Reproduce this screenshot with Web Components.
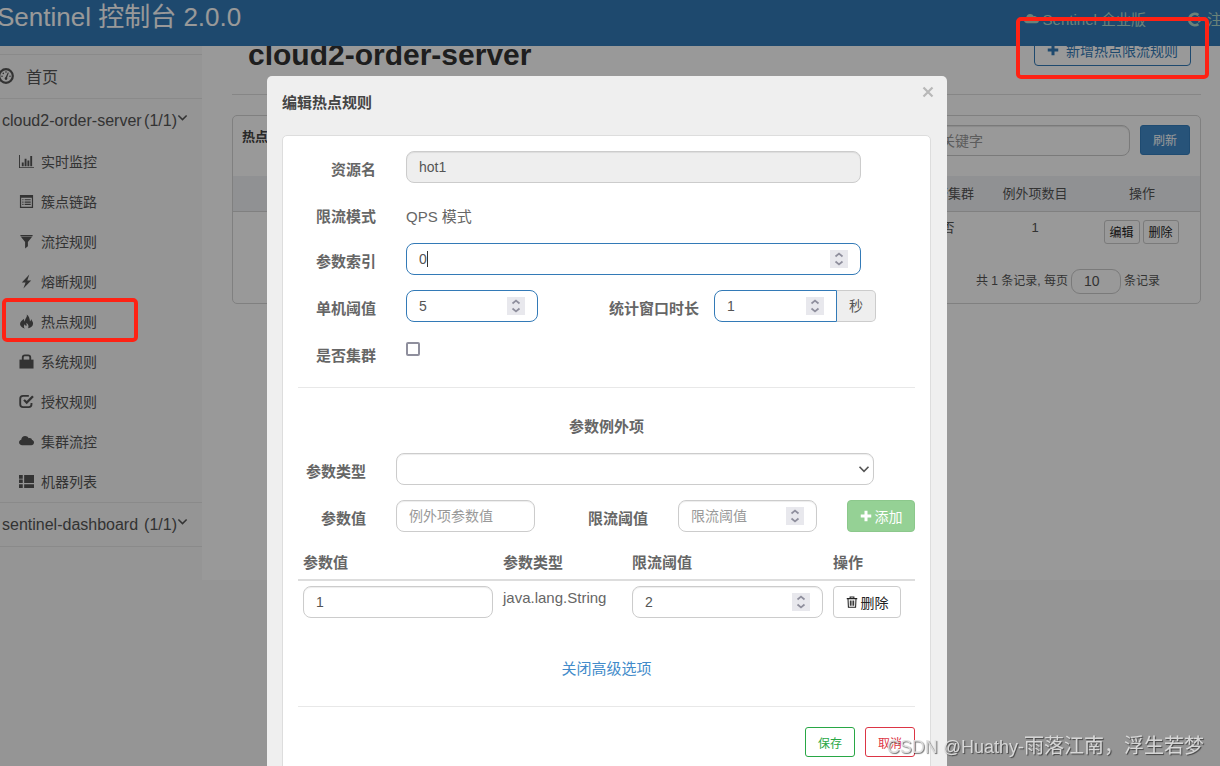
<!DOCTYPE html>
<html lang="zh-CN">
<head>
<meta charset="utf-8">
<title>Sentinel 控制台</title>
<style>
  html, body { margin: 0; min-height: 100%; background: #f8f8f8; }
  body { font-family: "Liberation Sans", "Noto Sans CJK SC", sans-serif; font-size: 14px; color: #555; overflow: hidden; }
</style>
</head>
<body>
<sentinel-console></sentinel-console>
<script>
class Base extends HTMLElement {
  constructor() {
    super();
    const t = document.createElement('template');
    t.innerHTML = `<style>*{box-sizing:border-box}button,input,select{font-family:inherit;margin:0}</style>` + this.view();
    this.attachShadow({ mode: 'open' }).appendChild(t.content.cloneNode(true));
  }
}

const ICONS = {
  gauge: '<circle cx="8" cy="8" r="6.8" fill="none" stroke="currentColor" stroke-width="2.2"/><path d="M7 10.5 9.8 4.4l1 .4-2.2 6.2z"/><circle cx="8" cy="10.6" r="1.3"/><circle cx="4" cy="8.3" r=".8"/><circle cx="5.3" cy="5.4" r=".8"/><circle cx="12" cy="8.3" r=".8"/><circle cx="8" cy="4" r=".8"/>',
  bars: '<path d="M0 1h1v13h15v1H0zM3 9h2v4H3zM6 5h2v8H6zM9 7h2v6H9zM12 2h2v11h-2z"/>',
  list: '<path d="M1 1h14v14H1zM2.300 4v9.700h11.400V4z" fill-rule="evenodd"/><path d="M3.500 5.500h1.300v1.200H3.500zM6 5.500h6.500v1.200H6zM3.500 8h1.300v1.200H3.500zM6 8h6.500v1.200H6zM3.500 10.500h1.300v1.200H3.500zM6 10.500h6.500v1.200H6z"/>',
  filter: '<path d="M1.500 1h13v1.300h-13zM2 3h12L9.500 8.500V13l-3 2.500v-7z"/>',
  flash: '<path d="M11 .500 3 9h4L4.700 15.500 13 6.800H8.800z"/>',
  fire: '<path d="M8.300.500c.8 3-2.300 4.500-2 7.500-.8-.6-1.200-1.800-.9-3C3.200 6.500.800 8.500 1.100 11c.2 2.500 2.900 4 5.200 4.500C4.700 14 5 12 6.200 10.800c.3 1.200 1 1.500 1.700 1.900.4-1.400.2-2.400-.2-3.400 1.900.9 3.200 3.700 1.900 6 2.900-.5 5.300-2.400 5.400-5 .1-2-1.500-3.500-2.100-5-.1 1.300-.5 2-1.200 2.600C11.600 5 10.500 2 8.300.500z"/>',
  lock: '<path d="M.500 6h15v9.500H.500z"/><path d="M4 7V3.800C4 2.400 5 1.500 6.300 1.500h3.400C11 1.500 12 2.400 12 3.800V7" fill="none" stroke="currentColor" stroke-width="2"/>',
  check: '<path d="M10.500 2H4.300C2.500 2 1.300 3.200 1.300 5v6c0 1.900 1.200 3 3 3h6c1.900 0 3-1.100 3-3V9.500" fill="none" stroke="currentColor" stroke-width="2"/><path d="m4.500 7 1.700-1.500 2 2L14 1.500 15.800 3.200 8.200 11z"/>',
  cloud: '<path d="M3.500 12C1.400 12 0 10.600 0 8.900c0-1.500 1-2.600 2.400-2.900C2.500 3.700 4.300 2 6.500 2c1.700 0 3.100.9 3.800 2.400.3-.1.700-.2 1-.2 1.400 0 2.500 1 2.600 2.300 1.300.3 2.100 1.400 2.100 2.600 0 1.600-1.300 2.900-2.900 2.900z"/>',
  grid: '<path d="M0 1h4v4H0zM5.500 1H16v8.500H5.500zM0 5.900h4v3.600H0zM0 11h4v4H0zM5.500 11H16v4H5.500z"/>',
  down: '<path d="m2 5 6 6 6-6" fill="none" stroke="currentColor" stroke-width="2.200"/>',
  plus: '<path d="M6 1h4v5h5v4h-5v5H6v-5H1V6h5z"/>',
  logout: '<path d="M11 3.200A6 6 0 1 0 11 12.800" fill="none" stroke="currentColor" stroke-width="3"/><path d="M6 6.500h5V4l5 4-5 4V9.500H6z"/>',
  trash: '<path d="M1 3.500h14M5.500 3V1.200h5V3M2.700 4l.5 11h9.600l.5-11M5.800 6v7M8 6v7M10.200 6v7" fill="none" stroke="currentColor" stroke-width="1.400"/>',
  close: '<path d="m2 2 12 12M14 2 2 14" fill="none" stroke="currentColor" stroke-width="3"/>'
};

customElements.define('glyph-icon', class extends Base {
  view() {
    return `<style>:host{display:inline-block;width:15px;height:15px;flex:none}svg{display:block;width:100%;height:100%;fill:currentColor}</style>
      <svg viewBox="0 0 16 16" aria-hidden="true">${ICONS[this.getAttribute('name')]}</svg>`;
  }
});

customElements.define('spin-buttons', class extends Base {
  view() {
    return `<style>:host{display:block;flex:none;width:18px;height:18px;background:#e8e8ed;color:#8f8f9d}svg{display:block}</style>
      <svg width="18" height="18" viewBox="0 0 18 18" fill="none" stroke="currentColor" stroke-width="1.700" aria-hidden="true"><path d="M5.500 6.500 9 3.500l3.500 3M5.500 11.500l3.500 3 3.500-3"/></svg>`;
  }
});

customElements.define('top-bar', class extends Base {
  view() {
    return `<style>
      :host{display:flex;justify-content:space-between;height:46px;background:#337ab7;position:relative;z-index:1;overflow:hidden;white-space:nowrap}
      .brand{margin-left:-3px;font-size:26px;line-height:34px;color:#fff;text-decoration:none}
      nav{display:flex;gap:42px;margin-right:-17px;padding-top:10px}
      nav a{display:flex;gap:4px;font-size:15px;line-height:20px;color:#b2d9ca;text-decoration:none}
      nav glyph-icon{margin-top:2px}
    </style>
    <a class="brand" href="#">Sentinel 控制台 2.0.0</a>
    <nav><a href="#"><glyph-icon name="cloud"></glyph-icon>Sentinel 企业版</a><a href="#"><glyph-icon name="logout"></glyph-icon>注销</a></nav>`;
  }
});

customElements.define('nav-item', class extends Base {
  view() {
    return `<style>
      :host{display:block}
      a{display:flex;align-items:center;gap:7px;height:40px;padding:0 0 2px 19px;font-size:14px;color:inherit;text-decoration:none}
      glyph-icon{width:15px;height:15px}
    </style><a href="#"><glyph-icon name="${this.getAttribute('icon')}"></glyph-icon><slot></slot></a>`;
  }
});

customElements.define('nav-group', class extends Base {
  view() {
    return `<style>
      :host{display:block;border-bottom:1px solid #e7e7e7}
      a{display:flex;align-items:center;height:43px;padding:0 14px 0 2px;font-size:16px;color:inherit;text-decoration:none}
      .count{margin-left:auto}
      glyph-icon{width:11px;height:11px;margin-bottom:6px}
    </style><a href="#"><span>${this.getAttribute('app')}</span><span class="count">(1/1)</span><glyph-icon name="down"></glyph-icon></a><slot></slot>`;
  }
});

customElements.define('side-nav', class extends Base {
  view() {
    return `<style>
      :host{display:block;flex:none;width:202px;padding:8px 0 33px;background:#f8f8f8;color:#555}
      .home{display:flex;align-items:center;gap:12px;height:45px;margin-left:-2px;padding-bottom:2px;border:solid #e7e7e7;border-width:1px 0;font-size:16px;color:inherit;text-decoration:none}
      .home glyph-icon{width:16px;height:16px}
    </style>
    <a class="home" href="#"><glyph-icon name="gauge"></glyph-icon>首页</a>
    <nav-group app="cloud2-order-server">
      <nav-item icon="bars">实时监控</nav-item>
      <nav-item icon="list">簇点链路</nav-item>
      <nav-item icon="filter">流控规则</nav-item>
      <nav-item icon="flash">熔断规则</nav-item>
      <nav-item icon="fire">热点规则</nav-item>
      <nav-item icon="lock">系统规则</nav-item>
      <nav-item icon="check">授权规则</nav-item>
      <nav-item icon="cloud">集群流控</nav-item>
      <nav-item icon="grid">机器列表</nav-item>
    </nav-group>
    <nav-group app="sentinel-dashboard"></nav-group>`;
  }
});

customElements.define('rule-list', class extends Base {
  view() {
    return `<style>
      :host{display:block;flex:1;min-width:0;padding:0 19px 0 30px;background:#fff}
      header{display:flex;justify-content:space-between;align-items:flex-start;margin-top:-12px;padding:0 10px 22px 16px;border-bottom:1px solid #e0e0e0}
      h1{margin:4px 0 0;font-size:30px;line-height:34px;color:#333}
      .new{display:flex;align-items:center;gap:7px;height:32px;padding:0 12px;font-size:14px;color:#337ab7;background:#fff;border:1px solid #337ab7;border-radius:4px}
      .new glyph-icon{width:12px;height:12px}
      .card{margin-top:20px;padding-bottom:9px;border:1px solid #d5d5d5;border-radius:5px;font-size:13px}
      .tools{display:flex;align-items:flex-start;gap:10px;padding:9px 10px 21px 9px}
      h2{flex:1;margin:2px 0 0;font-size:13px;line-height:20px;color:#444}
      .tools input{width:202px;height:31px;margin-bottom:-1px;padding:0 12px;font-size:14px;border:1px solid #ccc;border-radius:8px;box-shadow:inset 0 1px 1px rgba(0,0,0,.1)}
      input::placeholder{color:#999}
      .go{width:50px;height:30px;padding:0 0 1px;font-size:12px;color:#fff;background:#428bca;border:1px solid #357ebd;border-radius:3px}
      table{width:100%;border-collapse:collapse;table-layout:fixed}
      th{height:35px;padding:0 0 2px;font-weight:normal;background:#f0f2f5;border-bottom:1px solid #d5d5d5}
      td{padding:8px 0;line-height:16px;text-align:center;vertical-align:top}
      .ops{display:flex;justify-content:center;gap:3px;padding-right:2px}
      .ops button{width:36px;height:24px;padding:0;font-size:12px;color:#222;background:#fff;border:1px solid #ccc;border-radius:3px}
      footer{display:flex;align-items:center;justify-content:flex-end;gap:3px;padding:17px 40px 0 0;font-size:12px}
      label,footer span{padding-bottom:3px}
      footer input{width:50px;height:25px;padding:0 12px;font-size:14px;color:#555;border:1px solid #ccc;border-radius:9px;background:#fff}
    </style>
    <header><h1>cloud2-order-server</h1><button class="new"><glyph-icon name="plus"></glyph-icon>新增热点限流规则</button></header>
    <section class="card">
      <div class="tools"><h2>热点参数限流规则</h2><input aria-label="关键字" placeholder="关键字"><button class="go">刷新</button></div>
      <table>
        <colgroup><col><col style="width:76px"><col style="width:98px"><col style="width:116px"></colgroup>
        <thead><tr><th></th><th>是否集群</th><th>例外项数目</th><th>操作</th></tr></thead>
        <tbody><tr><td></td><td>否</td><td>1</td><td><div class="ops"><button>编辑</button><button>删除</button></div></td></tr></tbody>
      </table>
      <footer><label for="size">共 1 条记录, 每页</label><input id="size" value="10"><span>条记录</span></footer>
    </section>`;
  }
});

customElements.define('rule-dialog', class extends Base {
  view() {
    return `<style>
      :host{display:block;position:fixed;inset:0;z-index:2;padding:76px 6px 30px 0;overflow:auto;scrollbar-width:none;background:rgba(0,0,0,.4)}
      .dialog{max-width:680px;margin:0 auto;padding:15px 16px 15px 15px;background:#efefef;border-radius:5px;color:#555}
      .head{display:flex;justify-content:space-between;align-items:flex-start}
      h2{margin:0;padding:1px 0 21px;font-size:15px;line-height:22px;color:#444}
      .close{width:20px;height:20px;margin-right:-7px;margin-top:-9px;padding:4px;border:0;background:none;color:#b8b8b8}
      .close glyph-icon{display:block;width:12px;height:12px}
      .card{padding:15px;background:#fff;border:1px solid #ddd;border-radius:5px}
      .row{display:flex;align-items:flex-start;min-height:30px;margin-bottom:15px}
      .row>label,.name{flex:none;width:78px;margin-right:30px;padding-top:8px;text-align:right;font-size:15px;font-weight:bold;line-height:22px;color:#666}
      .row.sub>label{width:68px}
      .row>label.mid{flex:1;width:auto;margin-right:15px}
      .row.sub>label.mid{margin-right:30px}
      .text{padding-top:8px;font-size:15px;line-height:22px;color:#666}
      .box{position:relative;display:flex;align-items:center;height:32px;padding:0 12px;background:#fff;border:1px solid #ccc;border-radius:8px;box-shadow:inset 0 1px 1px rgba(0,0,0,.075)}
      .box input{flex:1;min-width:0;width:100%;height:30px;padding:0;border:0;outline:0;background:none;font-size:14px;color:#555;appearance:textfield}
      input::-webkit-inner-spin-button{display:none}
      input::placeholder{color:#999}
      .active{border-color:#337ab7;box-shadow:none}
      .locked{background:#eee}
      .fill{flex:1;margin-right:54px}
      .sub .fill{margin-right:41px}
      .caret{position:absolute;left:20px;top:7px;width:1px;height:16px;background:#333}
      .joined{border-radius:8px 0 0 8px}
      .addon{width:39px;height:32px;border:1px solid #ccc;border-left:0;border-radius:0 5px 5px 0;background:#eee;text-align:center;font-size:14px;line-height:30px}
      .w132{width:132px}.w122{width:123px}.w139{width:139px}.tail{margin-right:39px}
      input[type=checkbox]{appearance:none;width:14px;height:14px;margin-top:5px;border:2px solid #8f8f9d;border-radius:2px;background:#fff}
      hr{height:1px;margin:20px 0;border:0;background:#e8e8e8}
      h3{margin:0 0 15px;padding-top:8px;height:30px;font-size:15px;line-height:22px;text-align:center;color:#666}
      .pick{padding:0}
      select{flex:1;height:30px;padding:0 12px;border:0;outline:0;background:none;appearance:none;font-size:14px;color:#555}
      .pick glyph-icon{position:absolute;right:3px;width:12px;height:12px;pointer-events:none}
      .btn{display:flex;align-items:center;justify-content:center;gap:3px;width:68px;height:32px;padding:0;border:1px solid #ccc;border-radius:4px;background:#fff;font-size:14px;color:#222}
      .btn glyph-icon{width:12px;height:12px}
      .add{margin-left:30px;color:#fff;background:#95d195;border-color:#8cc88c}
      table{width:100%;border-collapse:separate;border-spacing:0;table-layout:fixed;font-size:15px;line-height:22px;color:#666}
      th{padding:5px;text-align:left;border-bottom:2px solid #ddd}
      td{padding:5px;vertical-align:top}
      td.kind{padding-top:6px}
      .more{margin:35px 0 26px;text-align:center;font-size:15px;line-height:22px}
      .more a{color:#428bca;text-decoration:none}
      .more+hr{margin-top:0}
      .foot{display:flex;justify-content:flex-end;gap:10px;padding-bottom:10px}
      .foot button{width:50px;height:30px;padding:0;border:1px solid;border-radius:3px;background:#fff;font-size:12px}
      .save{color:#28a745}.cancel{color:#dc3545}
    </style>
    <form class="dialog" role="dialog" aria-label="编辑热点规则" onsubmit="return false">
      <div class="head"><h2>编辑热点规则</h2><button type="button" class="close" aria-label="关闭"><glyph-icon name="close"></glyph-icon></button></div>
      <div class="card">
        <div class="row"><label for="res">资源名</label><div class="box fill locked"><input id="res" value="hot1" readonly></div></div>
        <div class="row"><span class="name">限流模式</span><span class="text">QPS 模式</span></div>
        <div class="row"><label for="idx">参数索引</label><div class="box fill active"><input id="idx" type="number" value="0"><i class="caret"></i><spin-buttons></spin-buttons></div></div>
        <div class="row"><label for="cnt">单机阈值</label><div class="box active w132"><input id="cnt" type="number" value="5"><spin-buttons></spin-buttons></div>
          <label class="mid" for="win">统计窗口时长</label><div class="box active joined w122"><input id="win" type="number" value="1"><spin-buttons></spin-buttons></div><span class="addon tail">秒</span></div>
        <div class="row"><label for="clu">是否集群</label><input id="clu" type="checkbox"></div>
        <hr>
        <h3>参数例外项</h3>
        <div class="row sub"><label for="type">参数类型</label><div class="box pick fill"><select id="type"><option></option></select><glyph-icon name="down"></glyph-icon></div></div>
        <div class="row sub"><label for="val">参数值</label><div class="box w139"><input id="val" placeholder="例外项参数值"></div>
          <label class="mid" for="lim">限流阈值</label><div class="box w139"><input id="lim" type="number" placeholder="限流阈值"><spin-buttons></spin-buttons></div>
          <button type="button" class="btn add"><glyph-icon name="plus"></glyph-icon>添加</button></div>
        <table>
          <colgroup><col style="width:200px"><col style="width:129px"><col style="width:201px"><col></colgroup>
          <thead><tr><th>参数值</th><th>参数类型</th><th>限流阈值</th><th>操作</th></tr></thead>
          <tbody><tr><td><div class="box"><input aria-label="参数值" value="1"></div></td><td class="kind">java.lang.String</td>
            <td><div class="box"><input aria-label="限流阈值" type="number" value="2"><spin-buttons></spin-buttons></div></td>
            <td><button type="button" class="btn"><glyph-icon name="trash"></glyph-icon>删除</button></td></tr></tbody>
        </table>
        <div class="more"><a href="#">关闭高级选项</a></div>
        <hr>
        <div class="foot"><button class="save">保存</button><button type="button" class="cancel">取消</button></div>
      </div>
    </form>`;
  }
});

/* Red frame that highlights a spot above the page. */
customElements.define('mark-frame', class extends Base {
  view() {
    return `<style>:host{display:block;position:fixed;z-index:3;box-sizing:border-box;border:4px solid #ff2214;border-radius:5px;pointer-events:none}</style>`;
  }
});

customElements.define('author-mark', class extends Base {
  view() {
    return `<style>
      :host{display:block;position:fixed;right:16px;bottom:5px;z-index:3;font-size:20px;line-height:28px;color:rgba(225,225,225,.9);text-shadow:1px 1px 1px rgba(0,0,0,.55);white-space:nowrap;pointer-events:none}
      span{font-size:18px}
    </style><span>CSDN @Huathy-</span>雨落江南，浮生若梦`;
  }
});

customElements.define('sentinel-console', class extends Base {
  view() {
    return `<style>
      :host{display:block}
      .body{display:flex}
      .m1{left:2px;top:298px;width:136px;height:44px}
      .m2{right:11px;top:17px;width:193px;height:62px}
    </style>
    <top-bar></top-bar>
    <div class="body"><side-nav></side-nav><rule-list></rule-list></div>
    <rule-dialog></rule-dialog>
    <mark-frame class="m1"></mark-frame><mark-frame class="m2"></mark-frame>
    <author-mark></author-mark>`;
  }
});
</script>
</body>
</html>
